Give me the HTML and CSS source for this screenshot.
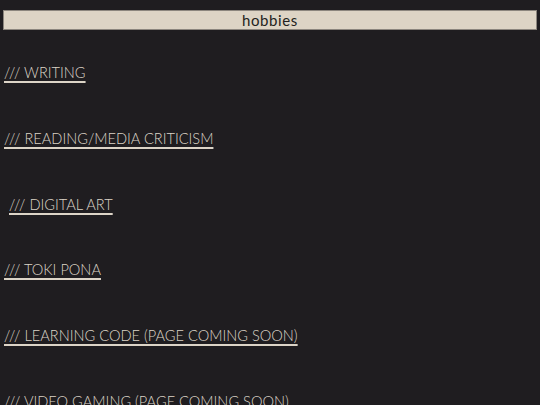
FILE: index.html
```html
<!doctype html>
<html lang="en">
  <head>
    <meta charset="utf-8" />
    <meta name="viewport" content="width=device-width, initial-scale=1" />
    <title>hobbies</title>
    <link rel="stylesheet" href="styles.css">
  </head>
  <body>
    <h1 class="title">hobbies</h1>

    <ul class="hobbies">
      <li><a href="#writing"><span class="mark">///</span> WRITING</a></li>
      <li><a href="#reading"><span class="mark">///</span> READING/MEDIA CRITICISM</a></li>
      <li class="indent"><a href="#art"><span class="mark">///</span> DIGITAL ART</a></li>
      <li><a href="#toki-pona"><span class="mark">///</span> TOKI PONA</a></li>
      <li><a href="#code"><span class="mark">///</span> LEARNING CODE (PAGE COMING SOON)</a></li>
      <li><a href="#gaming"><span class="mark">///</span> VIDEO GAMING (PAGE COMING SOON)</a></li>
    </ul>
  </body>
</html>
```

FILE: styles.css
```css
:root {
  --bg-color: #1f1d20;
  --text-color: #dcd4c7;
  --panel-color: #ddd4c5;
  --panel-border: #8c867e;
  --ink-color: #231f20;
}

body {
  font-family: Lato, 'Open Sans', sans-serif;
  background-color: var(--bg-color);
  color: var(--text-color);
  margin: 0;
  padding: 10px 3px 0;
}

.title {
  margin: 0;
  background-color: var(--panel-color);
  border: 1px solid var(--panel-border);
  color: var(--ink-color);
  font-size: 15px;
  font-weight: 400;
  letter-spacing: 0.6px;
  line-height: 18px;
  text-align: center;
}

.hobbies {
  list-style: none;
  margin: 33px 0 0;
  padding: 0 0 0 1px;
  display: flex;
  flex-direction: column;
  gap: 45.8px;
}

.hobbies li {
  line-height: 20px;
  font-size: 14.6px;
  font-weight: 300;
}

.hobbies .indent {
  padding-left: 5px;
}

.hobbies a {
  color: var(--text-color);
  text-decoration: underline;
  text-decoration-thickness: 2px;
  text-underline-offset: 3px;
}

/* the slashes sit wider apart than the caps */
.hobbies .mark {
  letter-spacing: 1.8px;
  margin-right: -1.8px;
}
```
